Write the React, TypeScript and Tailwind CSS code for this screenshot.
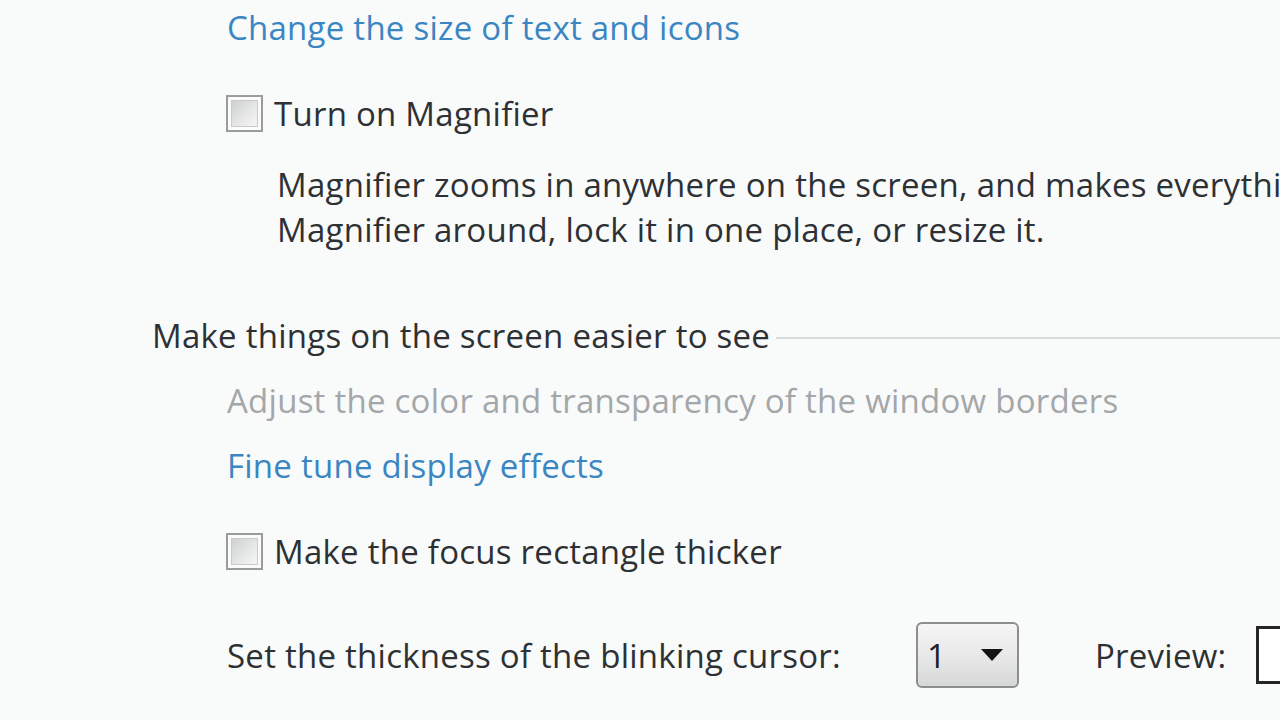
import React from "react";

function Checkbox() {
  return (
    <div className="w-[37px] h-[37px] shrink-0 border-2 border-[#9a9b9b] bg-[#fbfbfb] p-[3px]">
      <div className="w-full h-full border border-[#c9caca] bg-gradient-to-br from-[#cfd0d0] via-[#e3e4e4] to-[#f6f6f6]" />
    </div>
  );
}

export default function App() {
  return (
    <div
      className="w-[1280px] h-[720px] overflow-hidden bg-[#f9fafa] text-[#2e3134] text-[33px] leading-[45px] tracking-[0.25px] flex flex-col"
      style={{ fontFamily: '"Open Sans", "Noto Sans", sans-serif' }}
    >
      <div className="pl-[227px] h-[54px] flex items-center text-[#3a86c2]">
        Change the size of text and icons
      </div>

      <div className="pl-[226px] mt-[39px] h-[40px] flex items-center gap-[11px]">
        <Checkbox />
        <span>Turn on Magnifier</span>
      </div>

      <div className="pl-[277px] mt-[29px] whitespace-nowrap">
        <div>Magnifier zooms in anywhere on the screen, and makes everything on the screen larger. You can move</div>
        <div>Magnifier around, lock it in one place, or resize it.</div>
      </div>

      <div className="pl-[152px] mt-[61px] h-[45px] flex items-center">
        <span className="whitespace-nowrap">Make things on the screen easier to see</span>
        <div className="flex-1 h-[2px] bg-[#d9dcdd] ml-[6px] mt-[4px]" />
      </div>

      <div className="pl-[227px] mt-[20px] h-[45px] flex items-center text-[#a4a7a9] whitespace-nowrap">
        Adjust the color and transparency of the window borders
      </div>

      <div className="pl-[227px] mt-[20px] h-[45px] flex items-center text-[#3a86c2]">
        Fine tune display effects
      </div>

      <div className="pl-[226px] mt-[43px] h-[40px] flex items-center gap-[11px]">
        <Checkbox />
        <span>Make the focus rectangle thicker</span>
      </div>

      <div className="pl-[227px] mt-[51px] h-[66px] flex items-center whitespace-nowrap">
        <span className="w-[689px] shrink-0">Set the thickness of the blinking cursor:</span>
        <div className="w-[103px] h-[66px] shrink-0 rounded-[6px] border-2 border-[#8d8e8e] bg-gradient-to-b from-[#f5f5f5] via-[#e9e9e9] to-[#d6d7d7] flex items-center pl-[9px] pr-[14px] justify-between text-[#1f2224]">
          <span>1</span>
          <svg width="22" height="12" viewBox="0 0 22 12">
            <polygon points="0,0 22,0 11,12" fill="#151515" />
          </svg>
        </div>
        <span className="ml-[76px] w-[161px] shrink-0">Preview:</span>
        <div className="w-[60px] h-[58px] shrink-0 border-[3px] border-[#252525] bg-white" />
      </div>
    </div>
  );
}
